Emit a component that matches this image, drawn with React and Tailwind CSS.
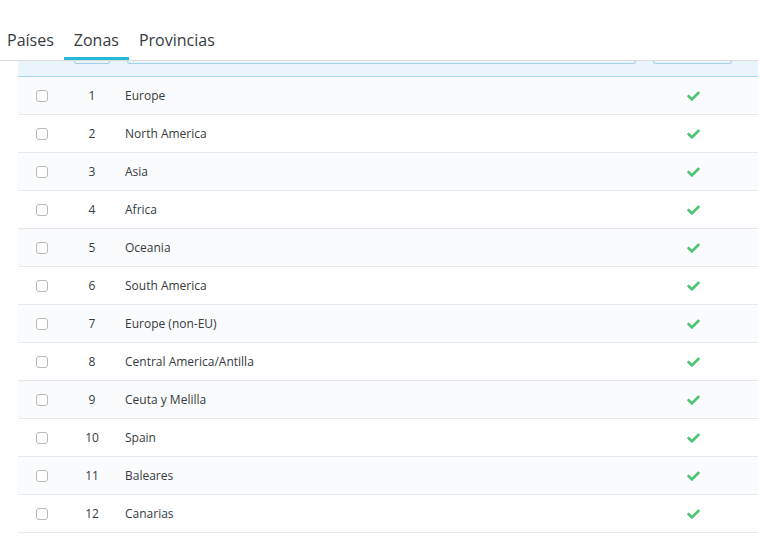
import React from 'react';

const zones = [
  'Europe',
  'North America',
  'Asia',
  'Africa',
  'Oceania',
  'South America',
  'Europe (non-EU)',
  'Central America/Antilla',
  'Ceuta y Melilla',
  'Spain',
  'Baleares',
  'Canarias',
];

function Check() {
  return (
    <svg width="13" height="11" viewBox="0 0 512 440" className="text-[#4cc470]">
      <path
        fill="currentColor"
        d="M173.9 431.4l-166.4-166.4c-10-10-10-26.2 0-36.2l36.2-36.2c10-10 26.2-10 36.2 0L192 304.7 432.1 64.6c10-10 26.2-10 36.2 0l36.2 36.2c10 10 10 26.2 0 36.2l-294.4 294.4c-10 10-26.2 10-36.2 0z"
      />
    </svg>
  );
}

export default function App() {
  const tabs = ['Países', 'Zonas', 'Provincias'];
  return (
    <div className="w-[758px] h-[550px] bg-white overflow-hidden text-[#363a41]" style={{ fontFamily: '"Open Sans", sans-serif' }}>
      {/* Tabs */}
      <div className="flex border-b border-[#dcdcdc] -ml-[3px]">
        {tabs.map(t => (
          <div
            key={t}
            className={`px-[10px] pt-[28px] pb-[5px] text-[16px] leading-6 border-b-[3px] ${
              t === 'Zonas' ? 'border-[#25b9d7]' : 'border-transparent'
            }`}
          >
            {t}
          </div>
        ))}
      </div>

      {/* Table */}
      <div className="ml-[18px]">
        <div className="h-[16px] bg-[#eaf5fb] border-b border-[#a3d6ee] flex items-start">
          <div className="ml-[56px] w-[36px] h-[3px] border-x border-b border-[#a3cfe6] rounded-b-[4px]" />
          <div className="ml-[17px] w-[509px] h-[3px] border-x border-b border-[#a3cfe6] rounded-b-[4px]" />
          <div className="ml-[17px] w-[79px] h-[3px] border-x border-b border-[#a3cfe6] rounded-b-[4px]" />
        </div>
        {zones.map((z, i) => (
          <div
            key={z}
            className={`flex items-center h-[38px] border-b border-[#e6e9ed] text-[12px] ${
              i % 2 === 0 ? 'bg-[#fafbfc]' : 'bg-white'
            }`}
          >
            <div className="w-[46px] pl-[18px] flex">
              <span className="w-[12px] h-[12px] border border-[#b9b9b9] rounded-[3px] bg-white" />
            </div>
            <div className="w-[56px] text-center">{i + 1}</div>
            <div className="flex-1 pl-[5px]">{z}</div>
            <div className="w-[96px] flex justify-center">
              <Check />
            </div>
            <div className="w-[17px]" />
          </div>
        ))}
      </div>
    </div>
  );
}
